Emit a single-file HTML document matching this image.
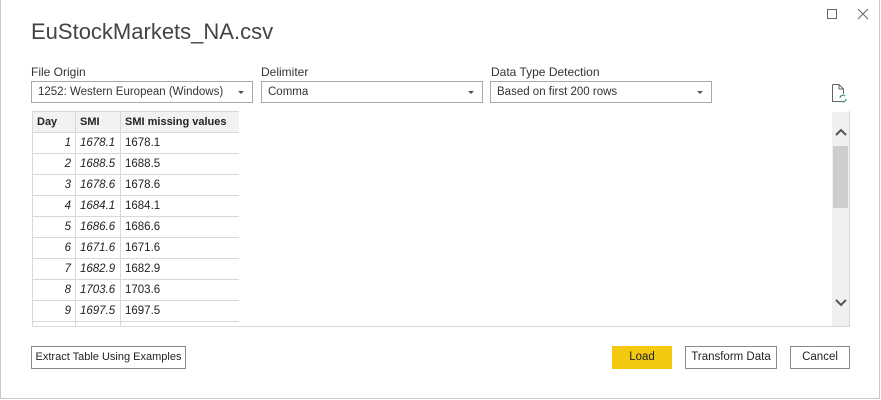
<!DOCTYPE html>
<html><head><style>
*{box-sizing:border-box;margin:0;padding:0}
body{width:881px;height:400px;background:#fff;font-family:"Liberation Sans",sans-serif;font-size:12px;color:#222;position:relative;overflow:hidden}
.win{position:absolute;left:0;top:0;width:880px;height:399px;border:1px solid #c8c8c8;border-top:none}
.abs{position:absolute;white-space:nowrap}
.title{left:31px;top:19px;font-size:22px;color:#444}
.lbl{top:65px;font-size:12px;color:#333}
.dd{top:81px;height:22px;width:222px;border:1px solid #a9a9a9;padding:4px 6px;font-size:11.5px;color:#333}
.dd:after{content:"";position:absolute;right:8px;top:9px;border-left:3px solid transparent;border-right:3px solid transparent;border-top:3px solid #555}
table{border-collapse:collapse;position:absolute;left:0;top:0;table-layout:fixed;width:207px}
td,th{border:1px solid #d8d8d8;height:21px;padding:0 4px;font-size:11.5px;white-space:nowrap;overflow:hidden}
th{background:#f2f2f2;text-align:left;font-weight:bold;font-size:11px}
td.a{text-align:right;font-style:italic}
td.b{font-style:italic}
.btn{top:346px;height:23px;border:1px solid #8a8a8a;text-align:center;line-height:21px;font-size:11.5px;color:#222}
</style></head><body>
<div class="win"></div>
<div class="abs" style="left:827px;top:9px;width:10px;height:10px;border:1px solid #666"></div>
<svg class="abs" style="left:857px;top:8px" width="12" height="12"><path d="M1 1L11 11M11 1L1 11" stroke="#666" stroke-width="1"/></svg>
<div class="abs title">EuStockMarkets_NA.csv</div>
<div class="abs lbl" style="left:31px">File Origin</div>
<div class="abs lbl" style="left:261px">Delimiter</div>
<div class="abs lbl" style="left:491px">Data Type Detection</div>
<div class="abs dd" style="left:31px">1252: Western European (Windows)</div>
<div class="abs dd" style="left:261px">Comma</div>
<div class="abs dd" style="left:490px">Based on first 200 rows</div>
<svg class="abs" style="left:830px;top:83px" width="18" height="20"><path d="M2.5 1.5H9L13.5 6V11M13.5 18.5H2.5V1.5M9 1.5V6H13.5" fill="none" stroke="#666"/><path d="M10 15a3 3 0 0 1 5-2M16 16a3 3 0 0 1-5 2" fill="none" stroke="#3a9a6a" stroke-width="1.2"/></svg>
<div class="abs" style="left:32px;top:111px;width:818px;height:216px;border:1px solid #d8d8d8;border-left:none;border-top:none"></div>
<div class="abs" style="left:832px;top:112px;width:17px;height:214px;background:#f0f0f0"></div>
<div class="abs" style="left:833px;top:146px;width:15px;height:62px;background:#cdcdcd"></div>
<svg class="abs" style="left:834px;top:127px" width="14" height="10"><path d="M2 8L7 3L12 8" fill="none" stroke="#555" stroke-width="2"/></svg>
<svg class="abs" style="left:834px;top:298px" width="14" height="10"><path d="M2 2L7 7L12 2" fill="none" stroke="#555" stroke-width="2"/></svg>
<div class="abs" style="left:32px;top:111px;width:207px;height:216px;overflow:hidden">
<table>
<colgroup><col style="width:43px"><col style="width:45px"><col style="width:119px"></colgroup>
<tr><th>Day</th><th>SMI</th><th>SMI missing values</th></tr>
<tr><td class="a">1</td><td class="b">1678.1</td><td>1678.1</td></tr>
<tr><td class="a">2</td><td class="b">1688.5</td><td>1688.5</td></tr>
<tr><td class="a">3</td><td class="b">1678.6</td><td>1678.6</td></tr>
<tr><td class="a">4</td><td class="b">1684.1</td><td>1684.1</td></tr>
<tr><td class="a">5</td><td class="b">1686.6</td><td>1686.6</td></tr>
<tr><td class="a">6</td><td class="b">1671.6</td><td>1671.6</td></tr>
<tr><td class="a">7</td><td class="b">1682.9</td><td>1682.9</td></tr>
<tr><td class="a">8</td><td class="b">1703.6</td><td>1703.6</td></tr>
<tr><td class="a">9</td><td class="b">1697.5</td><td>1697.5</td></tr>
<tr><td class="a">&nbsp;</td><td class="b">&nbsp;</td><td>&nbsp;</td></tr>
</table></div>
<div class="abs btn" style="left:31px;width:155px;font-size:11px">Extract Table Using Examples</div>
<div class="abs btn" style="left:612px;width:60px;background:#f2c811;border-color:#f2c811">Load</div>
<div class="abs btn" style="left:685px;width:92px">Transform Data</div>
<div class="abs btn" style="left:790px;width:60px">Cancel</div>
</body></html>
